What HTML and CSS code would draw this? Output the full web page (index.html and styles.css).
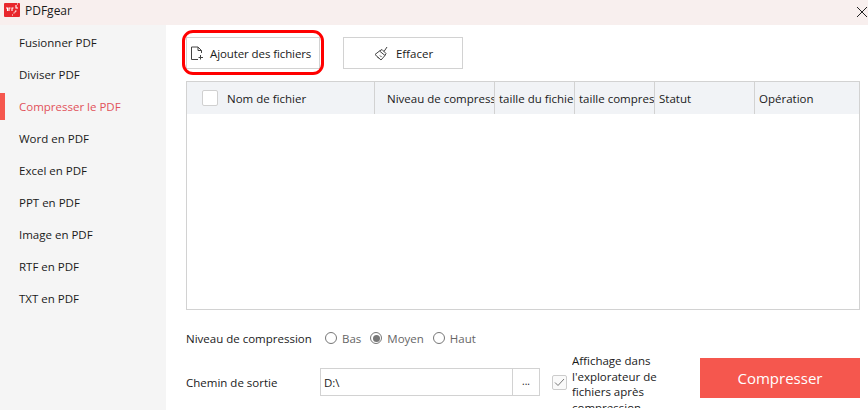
FILE: index.html
```html
<!DOCTYPE html>
<html lang="fr">
<head>
<meta charset="utf-8">
<title>PDFgear</title>
<link rel="stylesheet" href="styles.css">
</head>
<body>
<div class="app">
  <header class="titlebar">
    <svg class="logo" width="16" height="14" viewBox="0 0 16 14"><rect width="16" height="14" rx="1" fill="#e8262c"/><path d="M2 5h1.500v3M5 8V5h1.500M8 8V5h1.500M11 8h1.500M12 2v3h2M13 1h1M9.500 10h1M8 12h1M11 8.500v1" stroke="#fff" stroke-width="1.100" fill="none"/></svg>
    <span class="app-name">PDFgear</span>
    <svg class="close" width="12" height="12" viewBox="0 0 12 12"><path d="M1 1l10 10M11 1L1 11" stroke="#222" stroke-width="1" fill="none"/></svg>
  </header>
  <div class="body">
    <nav class="sidebar">
      <a class="nav-item">Fusionner PDF</a>
      <a class="nav-item">Diviser PDF</a>
      <a class="nav-item active">Compresser le PDF</a>
      <a class="nav-item">Word en PDF</a>
      <a class="nav-item">Excel en PDF</a>
      <a class="nav-item">PPT en PDF</a>
      <a class="nav-item">Image en PDF</a>
      <a class="nav-item">RTF en PDF</a>
      <a class="nav-item">TXT en PDF</a>
    </nav>
    <main class="content">
      <div class="toolbar">
        <button class="tool-btn add">
          <svg width="14" height="15" viewBox="0 0 14 15"><path d="M8 13.500H1.500V1h6.500l3.500 3.500V7M8 1v3.500h3.500M10.500 9v4.500M8.500 11.500h4.500" stroke="#444" stroke-width="1" fill="none"/></svg>
          <span>Ajouter des fichiers</span>
        </button>
        <button class="tool-btn clear">
          <svg width="15" height="15" viewBox="0 0 15 15"><path d="M1 8.500L5.500 5 11 9.500 7 14zM5.500 5L8 3.500 12 7.500 11 9.500M10 5.500L13 1M3.500 11l1.500 1.500M6 9.500l1.500 1.500" stroke="#444" stroke-width="1" fill="none"/></svg>
          <span>Effacer</span>
        </button>
      </div>
      <section class="table">
        <div class="thead">
          <div class="th c-name"><span class="box"></span><span class="th-text">Nom de fichier</span></div>
          <div class="th c-level"><span class="th-text">Niveau de compression</span></div>
          <div class="th c-size"><span class="th-text">taille du fichier</span></div>
          <div class="th c-comp"><span class="th-text">taille compressée</span></div>
          <div class="th c-status"><span class="th-text">Statut</span></div>
          <div class="th c-op"><span class="th-text">Opération</span></div>
        </div>
      </section>
      <div class="level-row">
        <span class="label">Niveau de compression</span>
        <span class="radio-group">
          <span class="radio-item"><span class="radio"></span>Bas</span>
          <span class="radio-item"><span class="radio on"></span>Moyen</span>
          <span class="radio-item"><span class="radio"></span>Haut</span>
        </span>
      </div>
      <div class="output-row">
        <span class="label path-label">Chemin de sortie</span>
        <div class="path-input">D:\</div>
        <div class="browse">...</div>
        <span class="check">
          <svg width="11" height="9" viewBox="0 0 11 9"><path d="M1 4.500L4 7.500 10 1" stroke="#777" stroke-width="1" fill="none"/></svg>
        </span>
        <div class="check-text">Affichage dans l'explorateur de fichiers après compression</div>
        <button class="compress">Compresser</button>
      </div>
    </main>
  </div>
  <div class="ring"></div>
</div>
</body>
</html>
```
FILE: styles.css
```css
* { box-sizing: border-box; }
html, body { margin: 0; height: 100%; overflow: hidden; background: #fff; }
body { font-family: "Open Sans", "Noto Sans", sans-serif; font-size: 11.500px; color: #1a1a1a; }
.app { position: relative; width: 868px; height: 410px; overflow: hidden; display: flex; flex-direction: column; }
.titlebar { height: 25px; flex: none; background: #f8efee; display: flex; align-items: center; padding: 0 4px 5px 4px; }
.logo { margin-right: 5px; flex: none; }
.app-name { font-size: 12px; color: #1a1a1a; }
.close { margin-left: auto; margin-right: -4px; margin-bottom: -4px; }
.body { flex: 1; display: flex; min-height: 0; }
.sidebar { width: 166px; flex: none; background: #f5f5f5; padding-top: 1px; display: flex; flex-direction: column; }
.nav-item { height: 32px; padding-left: 19px; display: flex; align-items: center; position: relative; }
.nav-item.active { color: #e2525a; }
.nav-item.active::before { content: ""; position: absolute; left: 0; top: 3px; bottom: 2px; width: 5px; background: #f5574e; }
.content { flex: 1; padding: 12px 8px 0 20px; display: flex; flex-direction: column; min-width: 0; }
.toolbar { display: flex; gap: 23px; height: 32px; flex: none; }
.tool-btn { height: 32px; background: #fff; border: 1px solid #d2d2d2; font: inherit; color: #1a1a1a; display: flex; align-items: center; padding: 0; }
.tool-btn.add { width: 134px; padding-left: 3px; gap: 6px; letter-spacing: -0.100px; }
.tool-btn.clear { width: 120px; justify-content: center; gap: 7px; padding-left: 1px; }
.table { height: 229px; margin-top: 12px; flex: none; border: 1px solid #d2d2d2; }
.thead { height: 32px; background: #f1f3f6; display: flex; }
.th { height: 32px; border-right: 1px solid #d2d2d2; display: flex; align-items: center; overflow: hidden; white-space: nowrap; padding-left: 4px; flex: none; }
.c-name { width: 188px; padding-left: 15px; }
.c-level { width: 120px; padding-left: 12px; }
.c-size, .c-comp { width: 80px; }
.c-status { width: 100px; }
.c-op { flex: 1; border-right: 0; }
.box { width: 16px; height: 16px; border: 1px solid #d0d0d0; border-radius: 2px; background: #fff; margin-right: 9px; flex: none; }
.level-row { display: flex; align-items: center; height: 20px; margin-top: 18px; flex: none; }
.label { width: 139px; flex: none; }
.radio-group { display: flex; gap: 9px; color: #666; }
.radio-item { display: flex; align-items: center; gap: 5px; }
.radio { width: 12px; height: 12px; border: 1px solid #777; border-radius: 50%; background: #fff; position: relative; flex: none; }
.radio.on::after { content: ""; position: absolute; inset: 1.500px; border-radius: 50%; background: #777; }
.output-row { display: flex; align-items: center; height: 50px; margin-top: 9px; flex: none; overflow: visible; }
.path-label { width: 134px; }
.path-input { width: 193px; height: 28px; border: 1px solid #d2d2d2; display: flex; align-items: center; padding-left: 3px; }
.browse { width: 28px; height: 28px; margin-left: -1px; border: 1px solid #d2d2d2; display: flex; align-items: center; justify-content: center; font-size: 10px; padding-bottom: 2px; }
.check { width: 15px; height: 15px; margin-left: 12px; margin-right: 5px; border: 1px solid #ccc; border-radius: 2px; background: #fafafa; display: flex; align-items: center; justify-content: center; flex: none; }
.check-text { width: 100px; height: 55px; line-height: 15.500px; overflow: hidden; margin-bottom: 3px; flex: none; }
.compress { width: 160px; height: 40px; margin-left: 28px; margin-bottom: 9px; border: 0; background: #f5574e; color: #fff; font: inherit; font-size: 15px; flex: none; }
.ring { position: absolute; left: 182px; top: 30px; width: 142px; height: 45px; border: 3px solid #f00; border-radius: 11px; pointer-events: none; }
```
